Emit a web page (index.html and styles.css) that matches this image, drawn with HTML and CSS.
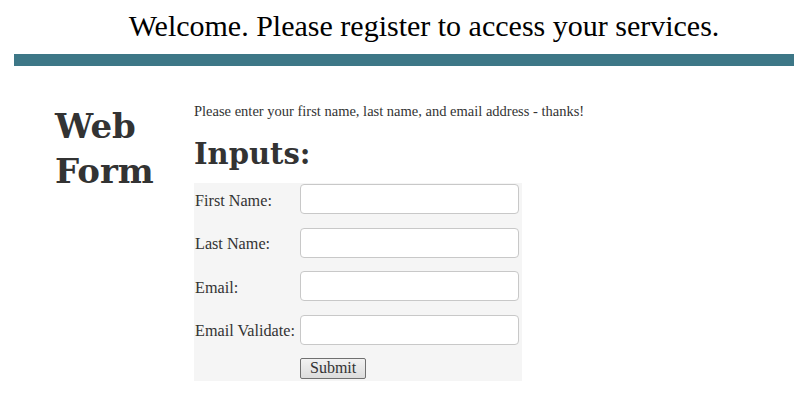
FILE: index.html
```html
<!DOCTYPE html>
<html>
<head>
<meta charset="utf-8">
<link rel="stylesheet" href="styles.css">
</head>
<body>
<header class="top">
  <h1 class="welcome">Welcome. Please register to access your services.</h1>
  <div class="bar"></div>
</header>
<main class="main">
  <aside class="side">
    <h2 class="side-title">Web<br>Form</h2>
  </aside>
  <section class="content">
    <p class="intro">Please enter your first name, last name, and email address - thanks!</p>
    <h3 class="inputs-title">Inputs:</h3>
    <form class="form">
      <div class="row"><label class="lbl">First Name:</label><input class="field" type="text"></div>
      <div class="row"><label class="lbl">Last Name:</label><input class="field" type="text"></div>
      <div class="row"><label class="lbl">Email:</label><input class="field" type="text"></div>
      <div class="row"><label class="lbl">Email Validate:</label><input class="field" type="text"></div>
      <div class="row submit-row"><span class="lbl"></span><button class="submit" type="button">Submit</button></div>
    </form>
  </section>
</main>
</body>
</html>
```
FILE: styles.css
```css
html, body { margin: 0; padding: 0; background: #fff; }
body { font-family: "Liberation Serif", serif; color: #333; }
.top { padding: 0 9px 0 14px; }
.welcome {
  margin: 0;
  padding: 9px 0 0 40px;
  height: 54px;
  box-sizing: border-box;
  text-align: center;
  font-weight: normal;
  font-size: 30px;
  line-height: 34px;
  color: #000;
}
.bar { height: 12px; background: #3d7787; }
.main { display: flex; padding-top: 37px; }
.side { width: 194px; flex: none; box-sizing: border-box; padding-left: 55px; padding-top: 1px; }
.side-title {
  margin: 0;
  font-family: "DejaVu Serif", serif;
  font-size: 34px;
  line-height: 45px;
  font-weight: bold;
  color: #333;
}
.content { flex: 1; }
.intro { margin: 0; font-size: 14.5px; line-height: 16px; color: #333; }
.inputs-title {
  margin: 17px 0 11px;
  font-family: "DejaVu Serif", serif;
  font-size: 29px;
  line-height: 36px;
  font-weight: bold;
  color: #333;
}
.form {
  width: 328px;
  background: #f5f5f5;
  padding: 1px 0 2px;
}
.row { display: flex; align-items: center; height: 30px; margin-bottom: 13.5px; }
.submit-row { height: 22px; margin-bottom: 0; margin-top: -1px; }
.lbl { width: 105px; flex: none; font-size: 16.2px; padding-left: 1px; padding-top: 4px; color: #333; }
.submit-row .lbl { padding-top: 0; }
.field {
  width: 219px;
  height: 30px;
  box-sizing: border-box;
  border: 1px solid #c8c8c8;
  border-radius: 4px;
  background: #fff;
  padding: 2px 6px;
  margin: 0;
}
.submit {
  font-family: "Liberation Serif", serif;
  font-size: 16px;
  color: #333;
  height: 21px;
  padding: 0 9px;
  border: 1px solid #707070;
  border-radius: 2px;
  background: linear-gradient(#f2f2f2, #dcdcdc);
  margin-left: 0;
}
```
